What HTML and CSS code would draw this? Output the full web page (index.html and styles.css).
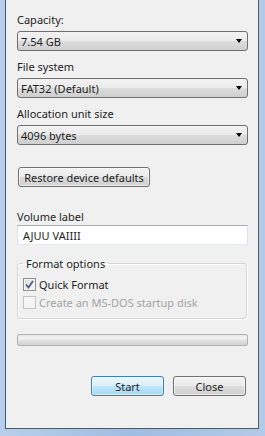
FILE: index.html
```html
<!DOCTYPE html>
<html lang="en">
<head>
<meta charset="UTF-8" />
<title>Format</title>
<link rel="stylesheet" href="styles.css">
</head>
<body>
<div class="window">
  <div class="dialog">
    <div class="label">Capacity:</div>
    <div class="combo"><span>7.54 GB</span><span class="arrow"></span></div>

    <div class="label">File system</div>
    <div class="combo"><span>FAT32 (Default)</span><span class="arrow"></span></div>

    <div class="label">Allocation unit size</div>
    <div class="combo"><span>4096 bytes</span><span class="arrow"></span></div>

    <div class="btn restore">Restore device defaults</div>

    <div class="label vol">Volume label</div>
    <div class="textbox">AJUU VAIIII</div>

    <fieldset class="group">
      <legend>Format options</legend>
      <div class="check-row">
        <span class="checkbox checked">
          <svg width="9" height="9" viewBox="0 0 9 9"><path d="M1 4.5 L3.5 7.5 L8 1" fill="none" stroke="#4a5d8c" stroke-width="1.8"/></svg>
        </span>
        <span>Quick Format</span>
      </div>
      <div class="check-row disabled">
        <span class="checkbox"></span>
        <span>Create an MS-DOS startup disk</span>
      </div>
    </fieldset>

    <div class="progress"></div>

    <div class="actions">
      <div class="btn default">Start</div>
      <div class="btn">Close</div>
    </div>
  </div>
</div>
</body>
</html>
```

FILE: styles.css
```css
:root {
  --frame: #a9c4e6;
  --edge: #4b5b70;
  --face: #f0f0f0;
  --text: #1e1e1e;
  --muted: #a3a3a3;
}
body {
  margin: 0;
  background: var(--frame);
  color: var(--text);
  font-family: "Noto Sans", "Open Sans", sans-serif;
  font-size: 11px;
}
.window {
  height: 436px;
  box-sizing: border-box;
  padding: 0 6px 7px 5px;
  background: linear-gradient(90deg, #b7cfea, #9fbce2 50%, #b3cbe8);
}
.dialog {
  height: 100%;
  box-sizing: border-box;
  background: var(--face);
  border: 1px solid var(--edge);
  border-top: none;
  padding: 12px 10px 0 11px;
  display: flex;
  flex-direction: column;
}
.label {
  line-height: 15px;
  margin-bottom: 4px;
}
.combo {
  height: 20px;
  box-sizing: border-box;
  border: 1px solid #707070;
  border-radius: 3px;
  background: linear-gradient(#f2f2f2, #ebebeb 50%, #dddddd 50%, #cfcfcf);
  display: flex;
  align-items: center;
  justify-content: space-between;
  padding: 0 5px 0 3px;
  margin-bottom: 8px;
}
.arrow {
  width: 0;
  height: 0;
  border-left: 3.5px solid transparent;
  border-right: 3.5px solid transparent;
  border-top: 4px solid #000;
}
.btn {
  height: 20px;
  box-sizing: border-box;
  border: 1px solid #707070;
  border-radius: 3px;
  background: linear-gradient(#f2f2f2, #ebebeb 50%, #dddddd 50%, #cfcfcf);
  box-shadow: inset 0 0 0 1px rgba(255, 255, 255, 0.6);
  display: flex;
  align-items: center;
  justify-content: center;
}
.restore {
  width: 132px;
  margin: 14px 0 0 1px;
}
.label.vol {
  margin: 22px 0 1px;
}
.textbox {
  height: 20px;
  box-sizing: border-box;
  background: #fff;
  border: 1px solid #dbdfe6;
  border-top-color: #abadb3;
  border-bottom-color: #e3e9ef;
  display: flex;
  align-items: center;
  padding-left: 5px;
}
.group {
  margin: 11px 1px 0 0;
  padding: 4px 4px 7px 5px;
  min-width: 0;
  border: 1px solid #d5d5d5;
  border-radius: 3px;
  box-shadow: inset 1px 1px 0 #fff, 1px 1px 0 #fff;
}
.group legend {
  padding: 0 3px;
  margin-left: 0;
  line-height: 15px;
}
.check-row {
  height: 18px;
  display: flex;
  align-items: center;
  gap: 3px;
}
.checkbox {
  width: 13px;
  height: 13px;
  box-sizing: border-box;
  border: 1px solid #8e8f8f;
  background: linear-gradient(135deg, #dcdcdc, #fafafa);
  box-shadow: inset 0 0 0 1px #f4f4f4;
  display: flex;
  align-items: center;
  justify-content: center;
}
.disabled {
  color: var(--muted);
}
.disabled .checkbox {
  border-color: #c4c4c4;
  background: #f4f4f4;
}
.progress {
  height: 12px;
  box-sizing: border-box;
  margin-top: 15px;
  border: 1px solid #b2b2b2;
  border-radius: 2px;
  background: linear-gradient(#e4e4e4, #f4f4f4 30%, #dedede 60%, #d2d2d2);
}
.actions {
  display: flex;
  justify-content: flex-end;
  gap: 9px;
  margin: 30px 2px 0 0;
}
.actions .btn {
  width: 73px;
}
.btn.default {
  border-color: #3c7fb1;
  background: linear-gradient(#eaf6fd, #d9f0fc 50%, #bee6fd 50%, #a7d9f5);
  box-shadow: inset 0 0 0 1px rgba(255, 255, 255, 0.5);
}
```
